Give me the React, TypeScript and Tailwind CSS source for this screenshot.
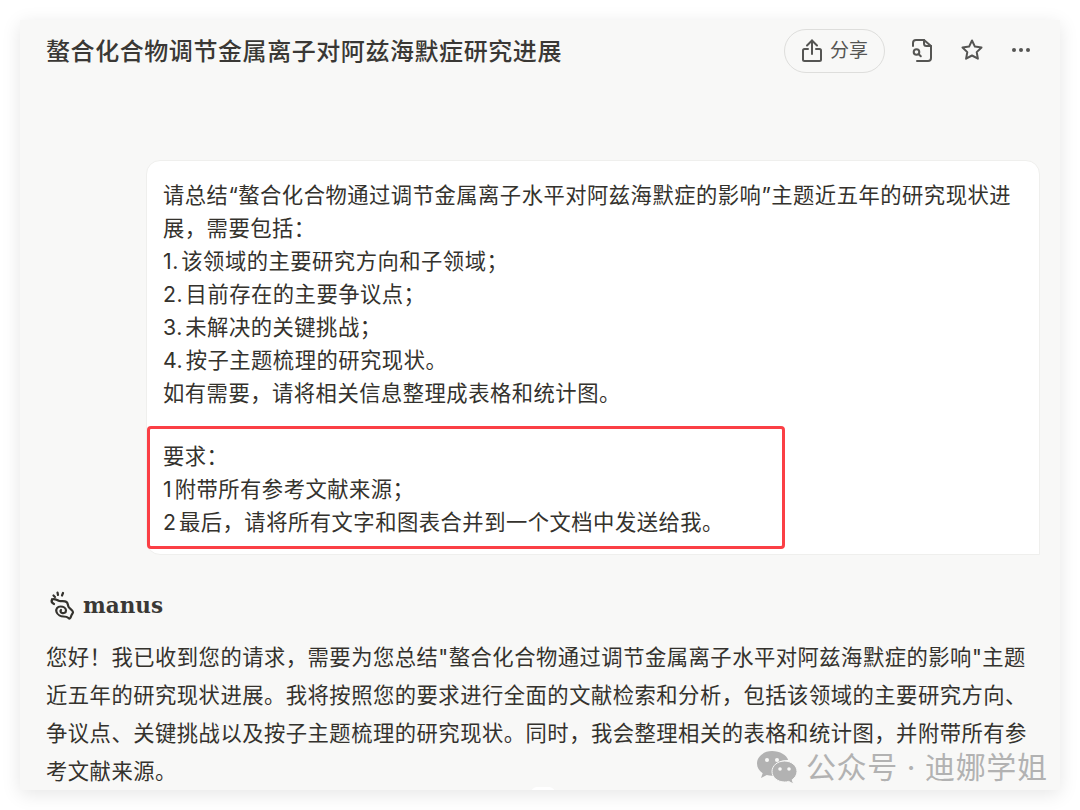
const cjk = { fontFamily: '"Inter", "Noto Sans CJK SC", sans-serif' }

function ShareIcon() {
  return (
    <svg width="22" height="26" viewBox="0 0 22 26" fill="none" stroke="#555553" strokeWidth="2" strokeLinecap="round" strokeLinejoin="round">
      <path d="M11 16V2.500" />
      <path d="M6 7.500 11 2.500 16 7.500" />
      <path d="M7 11H3.500A1.500 1.500 0 0 0 2 12.500v9A1.500 1.500 0 0 0 3.500 23h15a1.500 1.500 0 0 0 1.500-1.500v-9A1.500 1.500 0 0 0 18.500 11H15" />
    </svg>
  )
}

function FileSearchIcon() {
  return (
    <svg width="22" height="24" viewBox="0 0 22 24" fill="none" stroke="#555553" strokeWidth="2" strokeLinecap="round" strokeLinejoin="round">
      <path d="M2 8V5a3 3 0 0 1 3-3h8l7 6v12a3 3 0 0 1-3 3H6" />
      <path d="M13 2v3.500A2.500 2.500 0 0 0 15.500 8H20" />
      <circle cx="5.500" cy="14" r="2.800" />
      <path d="m8 16.500 1.800 1.800" />
    </svg>
  )
}

function StarIcon() {
  return (
    <svg width="24" height="24" viewBox="0 0 24 24" fill="none" stroke="#555553" strokeWidth="2" strokeLinejoin="round">
      <path d="m12 2.500 2.900 6.100 6.600.9-4.800 4.600 1.200 6.600L12 17.500l-5.900 3.200 1.200-6.600-4.800-4.600 6.600-.9z" />
    </svg>
  )
}

function MoreIcon() {
  return (
    <svg width="20" height="6" viewBox="0 0 20 6" fill="#555553">
      <circle cx="3" cy="3" r="2" />
      <circle cx="10" cy="3" r="2" />
      <circle cx="17" cy="3" r="2" />
    </svg>
  )
}

// hand-ish swirl mark, traced off the screenshot
function ManusLogo() {
  return (
    <svg width="26" height="30" viewBox="5 5 26 30" fill="none" stroke="#34322d" strokeWidth="2.200" strokeLinecap="round" strokeLinejoin="round">
      <path d="M9.500 9.500 11 11" />
      <path d="M13.500 6.500 14 9" />
      <path d="M19 7 18 9.500" />
      <path d="M8 13.500c3-1.500 5 1 7.500 1.500s5-.5 7 1 1 4 2.500 5.500 4 3 4 4.500-1.500 2.500-2 4.500-1.500 2.500-2.500 1.500-2.500-1.500-5-1.500-6-1.500-7-4.500 1-5.500 4-5.500 5.500 1.500 5.500 4-2.500 3-4 2.500-2-2-1-3" />
      <path d="M8 13.500c-1 2 0 3.500 2 4.500" />
    </svg>
  )
}

function WechatIcon() {
  return (
    <svg width="42" height="34" viewBox="0 0 42 34" fill="#b2b2b2">
      <path d="M16 1C7.700 1 1 6.600 1 13.500c0 4 2.200 7.400 5.700 9.700L5 28l5.800-3c1.600.5 3.400.8 5.200.8.600 0 1.200 0 1.800-.1-.4-1.200-.6-2.400-.6-3.700 0-6.800 6.200-12 14-12h1C30.800 5 24 1 16 1z" />
      <path d="M41 21.500c0-5.800-5.700-10.500-12.500-10.500S16 15.700 16 21.500 21.700 32 28.500 32c1.500 0 2.900-.2 4.200-.6L37.500 34l-1.300-4.300c2.900-1.900 4.800-4.900 4.800-8.200z" stroke="#f8f8f7" strokeWidth="1" />
      <circle cx="11" cy="10" r="2" fill="#f8f8f7" />
      <circle cx="21" cy="10" r="2" fill="#f8f8f7" />
      <circle cx="24" cy="19" r="1.800" fill="#f8f8f7" />
      <circle cx="33" cy="19" r="1.800" fill="#f8f8f7" />
    </svg>
  )
}

export default function App() {
  return (
    <div className="w-[1080px] h-[810px] overflow-hidden bg-white pt-5 px-5" style={cjk}>
      <div className="relative w-[1040px] h-[770px] overflow-hidden bg-[#f8f8f7] shadow-[0_4px_18px_rgba(0,0,0,0.1)] text-[#34322d]">
        <header className="flex items-start justify-between h-[64px] pl-[26px] pr-[29px]">
          <h1 className="mt-[16px] text-[24px] leading-[32px] tracking-[0.57px] font-medium text-[#3a3835]">螯合化合物调节金属离子对阿兹海默症研究进展</h1>
          <div className="flex items-center mt-[9px]">
            <button className="flex items-center gap-[7px] w-[101px] h-[44px] pl-[16px] rounded-full border border-[#dededc] text-[19px] text-[#555553]">
              <ShareIcon />
              分享
            </button>
            <span className="ml-[26px] mt-[-2px]"><FileSearchIcon /></span>
            <span className="ml-[27px] mt-[-2px]"><StarIcon /></span>
            <span className="ml-[27px] mt-[-2px]"><MoreIcon /></span>
          </div>
        </header>

        <div className="ml-[126px] mt-[76px] w-[894px] h-[395px] rounded-t-[14px] rounded-bl-[14px] bg-white border border-[#efefed] pl-[16px] pt-[18px] text-[21.3px] leading-[33px] tracking-[0.5px] [word-spacing:-4px]">
          <p>请总结“螯合化合物通过调节金属离子水平对阿兹海默症的影响”主题近五年的研究现状进<br />展，需要包括：</p>
          <p>1. 该领域的主要研究方向和子领域；</p>
          <p>2. 目前存在的主要争议点；</p>
          <p>3. 未解决的关键挑战；</p>
          <p>4. 按子主题梳理的研究现状。</p>
          <p>如有需要，请将相关信息整理成表格和统计图。</p>
          <div className="-ml-[16px] mt-[16px] w-[638px] h-[123px] rounded-[4px] border-[3px] border-[#fb3f45] pl-[13px] pt-[11px]">
            <p>要求：</p>
            <p>1 附带所有参考文献来源；</p>
            <p>2 最后，请将所有文字和图表合并到一个文档中发送给我。</p>
          </div>
        </div>

        <div className="flex items-center gap-[8px] ml-[29px] mt-[35px] h-[32px]">
          <ManusLogo />
          <span className="text-[21.5px] font-bold text-[#3a3835]" style={{ fontFamily: '"DejaVu Serif", serif' }}>manus</span>
        </div>

        <p className="ml-[26px] mt-[16px] w-[1005px] text-[21.3px] leading-[38px] tracking-[0.5px]">
          您好！我已收到您的请求，需要为您总结"螯合化合物通过调节金属离子水平对阿兹海默症的影响"主题<br />
          近五年的研究现状进展。我将按照您的要求进行全面的文献检索和分析，包括该领域的主要研究方向、<br />
          争议点、关键挑战以及按子主题梳理的研究现状。同时，我会整理相关的表格和统计图，并附带所有参<br />
          考文献来源。
        </p>

        <div className="absolute left-[736px] top-[729px] flex items-center gap-[8px] text-[30px] leading-[36px] tracking-[0.6px] text-[#b2b2b2]">
          <WechatIcon />
          <span>公众号 · 迪娜学姐</span>
        </div>
        <div className="absolute left-[511px] top-[767px] w-[24px] h-[6px] rounded-t-full bg-white" />
      </div>
    </div>
  )
}
